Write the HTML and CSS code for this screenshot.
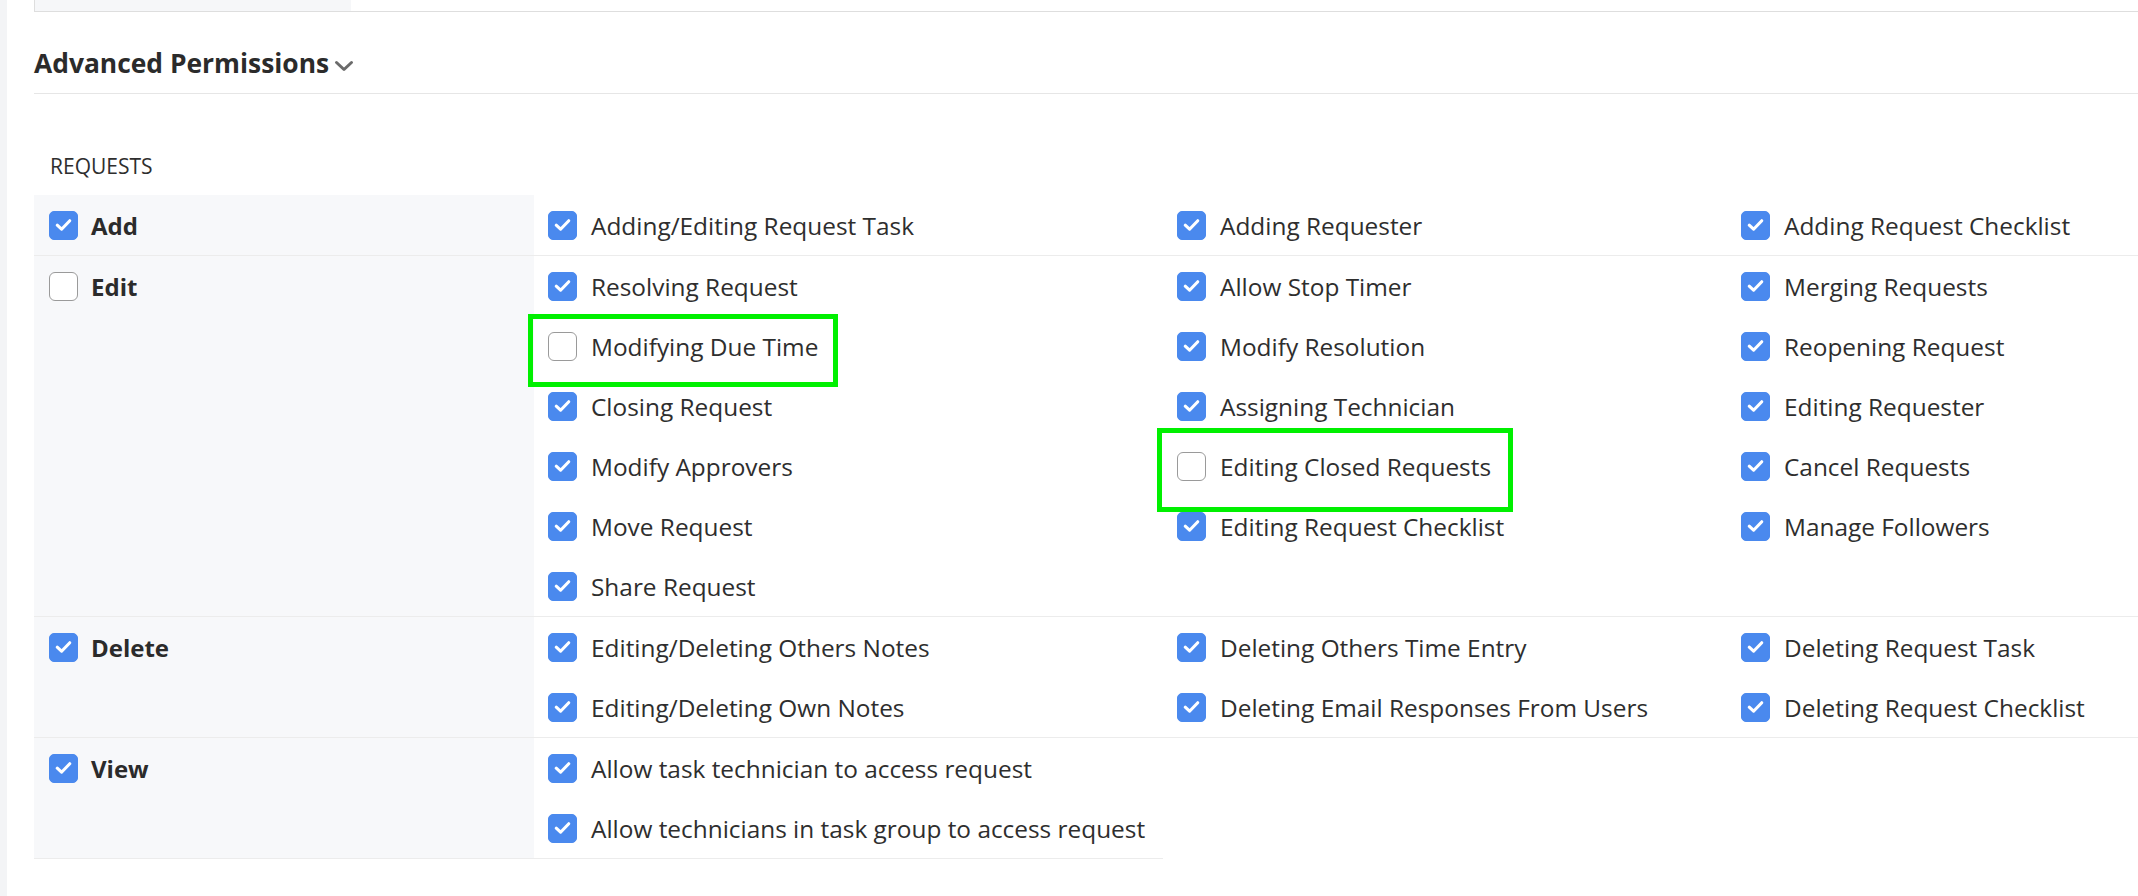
FILE: index.html
```html
<!DOCTYPE html>
<html lang="en">
<head>
  <meta charset="UTF-8" />
  <title>Advanced Permissions</title>
  <link rel="stylesheet" href="styles.css">
</head>
<body>
  <div class="page">
    <div class="edge"></div>
    <div class="main">
      <div class="top-bar"><div class="tab"></div></div>

      <h2 class="section-head">Advanced Permissions<svg class="chevron" width="20" height="12" viewBox="0 0 20 12"><path d="M2.5 2.5 L10 9.5 L17.5 2.5" fill="none" stroke="#6b6b6b" stroke-width="3" stroke-linecap="round" stroke-linejoin="round"/></svg></h2>

      <div class="group-title">REQUESTS</div>

      <table class="perms">
        <colgroup>
          <col class="c-main"><col class="c-1"><col class="c-2"><col class="c-3">
        </colgroup>
        <tr>
          <td class="head-cell"><label class="item main-item"><span class="box on"></span>Add</label></td>
          <td><label class="item"><span class="box on"></span>Adding/Editing Request Task</label></td>
          <td><label class="item"><span class="box on"></span>Adding Requester</label></td>
          <td><label class="item"><span class="box on"></span>Adding Request Checklist</label></td>
        </tr>
        <tr>
          <td class="head-cell"><label class="item main-item"><span class="box"></span>Edit</label></td>
          <td>
            <label class="item"><span class="box on"></span>Resolving Request</label>
            <label class="item"><span class="box"></span>Modifying Due Time<span class="mark mark-a"></span></label>
            <label class="item"><span class="box on"></span>Closing Request</label>
            <label class="item"><span class="box on"></span>Modify Approvers</label>
            <label class="item"><span class="box on"></span>Move Request</label>
            <label class="item"><span class="box on"></span>Share Request</label>
          </td>
          <td>
            <label class="item"><span class="box on"></span>Allow Stop Timer</label>
            <label class="item"><span class="box on"></span>Modify Resolution</label>
            <label class="item"><span class="box on"></span>Assigning Technician</label>
            <label class="item"><span class="box"></span>Editing Closed Requests<span class="mark mark-b"></span></label>
            <label class="item"><span class="box on"></span>Editing Request Checklist</label>
          </td>
          <td>
            <label class="item"><span class="box on"></span>Merging Requests</label>
            <label class="item"><span class="box on"></span>Reopening Request</label>
            <label class="item"><span class="box on"></span>Editing Requester</label>
            <label class="item"><span class="box on"></span>Cancel Requests</label>
            <label class="item"><span class="box on"></span>Manage Followers</label>
          </td>
        </tr>
        <tr>
          <td class="head-cell"><label class="item main-item"><span class="box on"></span>Delete</label></td>
          <td>
            <label class="item"><span class="box on"></span>Editing/Deleting Others Notes</label>
            <label class="item"><span class="box on"></span>Editing/Deleting Own Notes</label>
          </td>
          <td>
            <label class="item"><span class="box on"></span>Deleting Others Time Entry</label>
            <label class="item"><span class="box on"></span>Deleting Email Responses From Users</label>
          </td>
          <td>
            <label class="item"><span class="box on"></span>Deleting Request Task</label>
            <label class="item"><span class="box on"></span>Deleting Request Checklist</label>
          </td>
        </tr>
        <tr>
          <td class="head-cell"><label class="item main-item"><span class="box on"></span>View</label></td>
          <td>
            <label class="item"><span class="box on"></span>Allow task technician to access request</label>
            <label class="item"><span class="box on"></span>Allow technicians in task group to access request</label>
          </td>
        </tr>
      </table>
    </div>
  </div>

  <script>
    // tick icon for every checked box
    const tick = '<svg width="28" height="28" viewBox="0 0 28 28"><path d="M7.5 14.2 L12 18.4 L20.5 9.6" fill="none" stroke="#fff" stroke-width="3.2" stroke-linecap="round" stroke-linejoin="round"/></svg>';
    document.querySelectorAll(".box.on").forEach(b => { b.innerHTML = tick; });
  </script>
</body>
</html>
```

FILE: styles.css
```css
body {
  margin: 0;
  padding: 0;
  font-family: 'Open Sans', 'Noto Sans', sans-serif;
  background: #fff;
  color: #2e2e2e;
}
.page {
  display: flex;
  min-height: 896px;
}
.edge {
  width: 7px;
  background: #f3f4f6;
  flex-shrink: 0;
}
.main {
  flex: 1;
  padding-left: 27px;
}
.top-bar {
  height: 11px;
  border-bottom: 1px solid #dedede;
}
.tab {
  width: 316px;
  height: 11px;
  background: #f6f7f9;
  border-left: 1px solid #dedede;
}
.section-head {
  margin: 33px 0 0;
  padding-bottom: 12px;
  border-bottom: 1px solid #e6e6e6;
  font-size: 26.4px;
  line-height: 36px;
  font-weight: 700;
  color: #2b2b2b;
}
.chevron {
  margin-left: 5px;
  vertical-align: 1px;
}
.group-title {
  margin-top: 58px;
  padding-left: 16px;
  font-size: 21px;
  line-height: 28px;
  color: #2e2e2e;
}
.perms {
  margin-top: 15px;
  border-collapse: collapse;
  table-layout: fixed;
  width: 100%;
}
.c-main { width: 500px; }
.c-1 { width: 629px; }
.c-2 { width: 564px; }
.perms td {
  vertical-align: top;
  padding: 0 0 0 14px;
  border-bottom: 1px solid #ececec;
}
.perms td.head-cell {
  background: #f7f8fa;
  padding-left: 15px;
}
.item {
  position: relative;
  display: flex;
  align-items: center;
  height: 60px;
  font-size: 24.4px;
  white-space: nowrap;
  cursor: pointer;
}
.main-item {
  font-weight: 700;
  font-size: 24px;
  color: #2b2b2b;
}
.box {
  width: 27px;
  height: 27px;
  margin-right: 14px;
  border: 1px solid #9a9a9a;
  border-radius: 6px;
  background: #fff;
  flex-shrink: 0;
  display: flex;
  align-items: center;
  justify-content: center;
}
.box.on {
  border-color: #4a89ee;
  background: #4a89ee;
  border-radius: 5px;
}
.box svg {
  display: block;
}
.main-item .box {
  margin-right: 13px;
}

/* green annotation frames */
.mark {
  position: absolute;
  border: 5px solid #00f000;
  pointer-events: none;
}
.mark-a {
  left: -20px;
  top: -2px;
  width: 300px;
  height: 63px;
}
.mark-b {
  left: -20px;
  top: -8px;
  width: 346px;
  height: 74px;
}
```
